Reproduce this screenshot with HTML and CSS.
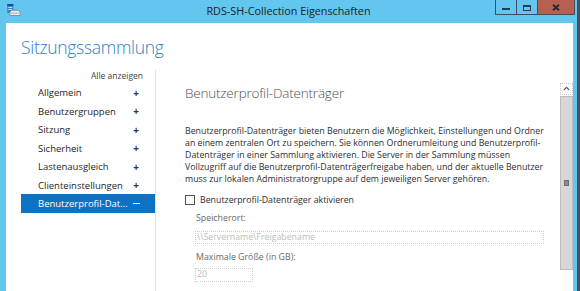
FILE: index.html
```html
<!DOCTYPE html>
<html lang="de">
<head>
<meta charset="utf-8">
<title>RDS-SH-Collection Eigenschaften</title>
<link rel="stylesheet" href="styles.css">
</head>
<body>
<div class="window">
  <div class="titlebar">
    <div class="tb-left">
      <svg class="app-icon" width="14" height="12" viewBox="0 0 14 12">
        <rect x="0.3" y="0" width="6" height="9" fill="#2f80d2"/>
        <rect x="0.3" y="0" width="6" height="1.8" fill="#1b4b8f"/>
        <rect x="1.3" y="3" width="4" height="1" fill="#c4e3fc"/>
        <rect x="1.3" y="5" width="4" height="1" fill="#c4e3fc"/>
        <path d="M2.8 8.2 L4.6 6.3 H11.4 L13.2 8.2 V11.5 H2.8 Z" fill="#eef2f6" stroke="#6f7d8a" stroke-width="0.8"/>
        <rect x="3.6" y="8.6" width="8.8" height="1.1" fill="#9eabb7"/>
      </svg>
    </div>
    <div class="title">RDS-SH-Collection Eigenschaften</div>
    <div class="tb-right">
      <div class="caption-buttons">
        <div class="cbtn cbtn-min"><span class="min-bar"></span></div>
        <div class="cbtn cbtn-max"><span class="max-box"></span></div>
        <div class="cbtn cbtn-close">
          <svg width="8" height="7" viewBox="0 0 8 7"><path d="M1 0.8 L7 6.2 M7 0.8 L1 6.2" stroke="#2b2b2b" stroke-width="1.9"/></svg>
        </div>
      </div>
    </div>
  </div>
  <div class="client">
    <h1 class="page-title">Sitzungssammlung</h1>
    <div class="main">
      <nav class="nav">
        <div class="show-all">Alle anzeigen</div>
        <ul class="nav-list">
          <li class="nav-item"><span>Allgemein</span><span class="pm">+</span></li>
          <li class="nav-item"><span>Benutzergruppen</span><span class="pm">+</span></li>
          <li class="nav-item"><span>Sitzung</span><span class="pm">+</span></li>
          <li class="nav-item"><span>Sicherheit</span><span class="pm">+</span></li>
          <li class="nav-item"><span>Lastenausgleich</span><span class="pm">+</span></li>
          <li class="nav-item"><span>Clienteinstellungen</span><span class="pm">+</span></li>
          <li class="nav-item selected"><span>Benutzerprofil-Dat...</span><span class="pm minus"></span></li>
        </ul>
      </nav>
      <section class="pane">
        <div class="scroll">
          <div class="content">
            <h2 class="section-title">Benutzerprofil-Datenträger</h2>
            <p class="desc">Benutzerprofil-Datenträger bieten Benutzern die Möglichkeit, Einstellungen und Ordner<br>an einem zentralen Ort zu speichern. Sie können Ordnerumleitung und Benutzerprofil-<br>Datenträger in einer Sammlung aktivieren. Die Server in der Sammlung müssen<br>Vollzugriff auf die Benutzerprofil-Datenträgerfreigabe haben, und der aktuelle Benutzer<br>muss zur lokalen Administratorgruppe auf dem jeweiligen Server gehören.</p>
            <label class="check-row"><span class="checkbox"></span><span>Benutzerprofil-Datenträger aktivieren</span></label>
            <div class="field-label label-first">Speicherort:</div>
            <div class="input input-wide">\\Servername\Freigabename</div>
            <div class="field-label">Maximale Größe (in GB):</div>
            <div class="input input-small">20</div>
          </div>
          <div class="scrollbar">
            <div class="sb-up">
              <svg width="7" height="5" viewBox="0 0 7 5"><path d="M0.8 4 L3.5 1.3 L6.2 4" fill="none" stroke="#606060" stroke-width="1.1"/></svg>
            </div>
            <div class="sb-thumb"><span class="grip"></span></div>
          </div>
        </div>
      </section>
    </div>
  </div>
</div>
</body>
</html>
```
FILE: styles.css
```css
* { box-sizing: border-box; }

html, body {
  margin: 0;
  padding: 0;
}

body {
  width: 580px;
  height: 291px;
  overflow: hidden;
  background: #62c6ef;
  font-family: "Open Sans", "Noto Sans", sans-serif;
}

.window {
  width: 580px;
  height: 291px;
  display: flex;
  flex-direction: column;
  border-right: 3px solid #4b545c;
}

.titlebar {
  height: 23px;
  flex: none;
  display: grid;
  grid-template-columns: 1fr auto 1fr;
  align-items: start;
}

.tb-left {
  display: flex;
}

.app-icon {
  margin: 4px 0 0 7px;
}

.title {
  margin-top: 4px;
  font-size: 10.8px;
  line-height: 14px;
  color: #1d1d1d;
  white-space: nowrap;
}

.tb-right {
  display: flex;
  justify-content: flex-end;
}

.caption-buttons {
  margin-right: 2px;
  display: flex;
  height: 15px;
  border: 1px solid #3a4f62;
  border-top: none;
}

.cbtn {
  height: 100%;
  display: flex;
  align-items: center;
  justify-content: center;
}

.cbtn-min { width: 21px; border-right: 1px solid #3a4f62; }
.cbtn-max { width: 20px; }
.cbtn-close { width: 37px; background: #b85f51; border-left: 1px solid #3a4f62; }

.min-bar {
  display: block;
  width: 8px;
  height: 2px;
  margin-top: 4px;
  background: #2f3b46;
}

.max-box {
  display: block;
  width: 8px;
  height: 6px;
  margin-top: 1px;
  border: 1px solid #2f3b46;
  border-top-width: 2px;
}

.client {
  flex: 1;
  min-height: 0;
  margin: 0 4px 0 6px;
  background: #ffffff;
  display: flex;
  flex-direction: column;
}

.page-title {
  margin: 0;
  padding: 12.2px 0 0 15px;
  font-size: 17.5px;
  font-weight: 300;
  line-height: 24px;
  color: #3082c4;
  letter-spacing: -0.3px;
}

.main {
  flex: 1;
  min-height: 0;
  margin-top: 10.8px;
  display: flex;
}

.nav {
  width: 150px;
  flex: none;
  border-right: 1px solid #e2e2e2;
  font-size: 9.5px;
  color: #262626;
}

.show-all {
  text-align: right;
  padding-right: 12px;
  font-size: 8.5px;
  line-height: 12px;
  height: 12px;
  color: #444;
}

.nav-list {
  list-style: none;
  margin: 1.3px 0 0 15px;
  padding: 0;
}

.nav-item {
  height: 18.5px;
  display: flex;
  align-items: center;
  justify-content: space-between;
  padding: 0 15px 0 17px;
  white-space: nowrap;
}

.pm {
  font-weight: 700;
  font-size: 10px;
  width: 8px;
  text-align: center;
  color: #333;
}

.nav-item.selected {
  background: #0b72c4;
  color: #ffffff;
}

.pm.minus {
  height: 1.5px;
  width: 7px;
  background: #ffffff;
}

.pane {
  flex: 1;
  min-width: 0;
  display: flex;
  flex-direction: column;
  padding-top: 12px;
}

.scroll {
  flex: 1;
  min-height: 0;
  display: flex;
}

.content {
  flex: 1;
  min-width: 0;
  padding: 2.25px 0 0 29px;
  font-size: 8.8px;
  color: #2e2e2e;
}

.section-title {
  margin: 0;
  font-size: 13.5px;
  font-weight: 300;
  line-height: 18px;
  color: #505050;
  letter-spacing: -0.2px;
}

.desc {
  margin: 23.25px 0 0 0;
  line-height: 12px;
  white-space: nowrap;
}

.check-row {
  margin-top: 7.5px;
  height: 14px;
  display: flex;
  align-items: center;
  gap: 5px;
}

.checkbox {
  width: 10px;
  height: 10px;
  border: 1px solid #555;
  background: #fff;
  flex: none;
}

.field-label {
  margin: 7.8px 0 0 11px;
  line-height: 12px;
  color: #6a6a6a;
}

.field-label.label-first { margin-top: 5.2px; }

.input {
  margin: 6.5px 0 0 10px;
  border: 1px dotted #cfcfcf;
  color: #bdbdbd;
  line-height: 11px;
  padding-left: 1px;
  white-space: nowrap;
}

.input-wide { width: 349px; height: 13px; }
.input-small { margin-top: 4.8px; width: 58px; height: 13.4px; }

.scrollbar {
  width: 13px;
  flex: none;
  display: flex;
  flex-direction: column;
  margin-top: 0.7px;
}

.sb-up {
  height: 12.5px;
  border: 1px dotted #c4c4c4;
  display: flex;
  align-items: center;
  justify-content: center;
}

.sb-thumb {
  height: 174px;
  margin-top: 1px;
  background: #d7d7d7;
  border: 1px solid #bcbcbc;
  display: flex;
  align-items: center;
  justify-content: center;
}

.grip {
  width: 5px;
  height: 6px;
  background: #8a8a8a;
  border: 1px solid #6e6e6e;
}
```
